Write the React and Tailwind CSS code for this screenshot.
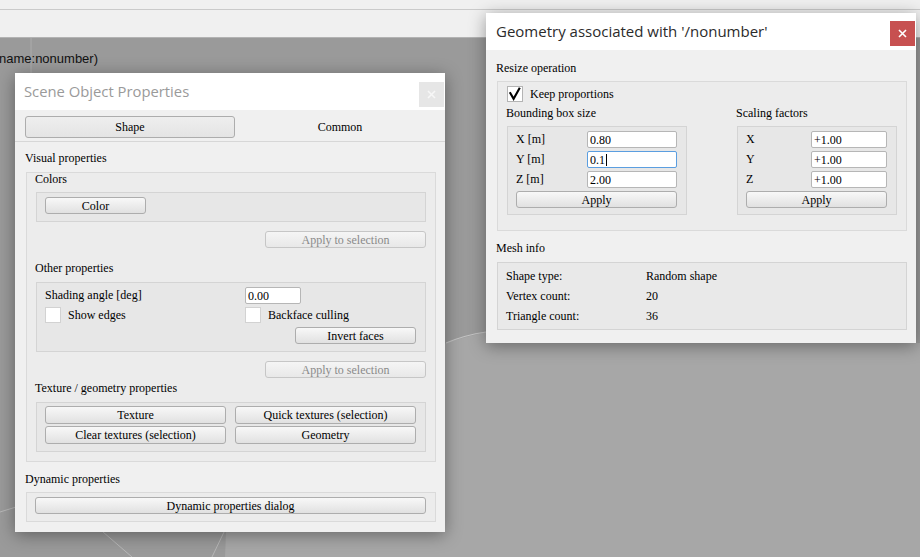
import React from "react";

const SERIF = "font-['Liberation_Serif','Times_New_Roman',serif]";
const TITLE = "font-['Segoe_UI','Open_Sans','Noto_Sans',sans-serif]";

function Btn({ className = "", disabled, children }) {
  return (
    <div
      className={`flex items-center justify-center rounded-[3px] border text-[12px] leading-none bg-linear-to-b whitespace-nowrap ${
        disabled
          ? "border-[#c6c6c6] from-[#f5f5f5] to-[#e8e8e8] text-[#8a8a8a]"
          : "border-[#adadad] from-[#f8f8f8] to-[#e1e1e1] text-black"
      } ${className}`}
    >
      {children}
    </div>
  );
}

function Check({ checked }) {
  return (
    <div
      className={`w-[16px] h-[16px] shrink-0 bg-white border ${
        checked ? "border-[#b4b4b4]" : "border-[#d2d2d2]"
      }`}
    >
      {checked && (
        <svg width="14" height="14" viewBox="0 0 14 14">
          <path d="M1.8 5.2 L5.6 11.8 L11.8 0.8" stroke="#000" strokeWidth="2.1" fill="none" />
        </svg>
      )}
    </div>
  );
}

function Field({ className = "", focused, children }) {
  return (
    <div
      className={`h-[17px] bg-white border rounded-[2px] px-[2px] flex items-center text-[12px] leading-none text-black ${
        focused ? "border-[#5b9ee0]" : "border-[#b6b6b6]"
      } ${className}`}
    >
      {children}
    </div>
  );
}

function CloseX({ color }) {
  return (
    <svg width="9" height="9" viewBox="0 0 9 9">
      <path d="M1 1 L8 8 M8 1 L1 8" stroke={color} strokeWidth="1.6" />
    </svg>
  );
}

function SceneDialog() {
  return (
    <div className={`absolute left-[15px] top-[73px] w-[430px] h-[459px] flex flex-col bg-[#f0f0f0] shadow-[0_3px_16px_rgba(0,0,0,0.38)] ${SERIF}`}>
      <div className="h-[37px] shrink-0 bg-white flex items-start justify-between pl-[9px] pr-[1px]">
        <div className={`${TITLE} text-[14.8px] leading-[37px] text-[#9a9a9a]`}>Scene Object Properties</div>
        <div className="mt-[9px] w-[25px] h-[25px] bg-[#e6e6e6] flex items-center justify-center">
          <CloseX color="#f7f7f7" />
        </div>
      </div>
      <div className="flex flex-col text-[12px] text-black">
        <div className="mt-[6px] pl-[10px] flex h-[22px]">
          <Btn className="w-[210px] h-[22px] !from-[#eeeeee] !to-[#e4e4e4]">Shape</Btn>
          <div className="w-[210px] h-[22px] flex items-center justify-center leading-none">Common</div>
        </div>
        <div className="mt-[3px] h-[1px] bg-[#d7d7d7]" />
        <div className="pl-[10px] flex flex-col">
          <div className="mt-[8px] leading-[16px] h-[16px]">Visual properties</div>
          <div className="mt-[6px] ml-[1px] w-[410px] h-[290px] border border-[#dadada] bg-[#ececec] px-[9px] flex flex-col">
            <div className="leading-[12px] h-[12px] -ml-[1px]">Colors</div>
            <div className="mt-[7px] h-[30px] border border-[#d4d4d4] bg-[#e7e7e7] pl-[8px] pt-[4px]">
              <Btn className="w-[101px] h-[17px]">Color</Btn>
            </div>
            <div className="mt-[9px] flex justify-end">
              <Btn disabled className="w-[161px] h-[17px]">Apply to selection</Btn>
            </div>
            <div className="mt-[14px] leading-[12px] h-[12px] -ml-[1px]">Other properties</div>
            <div className="mt-[8px] h-[70px] border border-[#d4d4d4] bg-[#e7e7e7] pl-[8px] pt-[4px] flex flex-col">
              <div className="flex h-[17px]">
                <div className="w-[200px] leading-[17px]">Shading angle [deg]</div>
                <Field className="w-[56px]">0.00</Field>
              </div>
              <div className="mt-[3px] flex h-[16px]">
                <div className="w-[200px] flex gap-[7px]">
                  <Check />
                  <span className="leading-[16px]">Show edges</span>
                </div>
                <div className="flex gap-[7px]">
                  <Check />
                  <span className="leading-[16px]">Backface culling</span>
                </div>
              </div>
              <div className="mt-[4px] pl-[250px]">
                <Btn className="w-[121px] h-[17px]">Invert faces</Btn>
              </div>
            </div>
            <div className="mt-[9px] flex justify-end">
              <Btn disabled className="w-[161px] h-[17px]">Apply to selection</Btn>
            </div>
            <div className="mt-[4px] leading-[12px] h-[12px] -ml-[1px]">Texture / geometry properties</div>
            <div className="mt-[8px] h-[50px] border border-[#d4d4d4] bg-[#e7e7e7] pl-[8px] pt-[3px] grid grid-cols-[181px_181px] gap-x-[9px] gap-y-[2px] content-start">
              <Btn className="h-[18px]">Texture</Btn>
              <Btn className="h-[18px]">Quick textures (selection)</Btn>
              <Btn className="h-[18px]">Clear textures (selection)</Btn>
              <Btn className="h-[18px]">Geometry</Btn>
            </div>
          </div>
          <div className="mt-[9px] leading-[16px] h-[16px]">Dynamic properties</div>
          <div className="mt-[5px] ml-[1px] w-[410px] h-[30px] border border-[#dadada] bg-[#ececec] pl-[8px] pt-[4px]">
            <Btn className="w-[391px] h-[17px]">Dynamic properties dialog</Btn>
          </div>
        </div>
      </div>
    </div>
  );
}

function Row({ label, labelW, fieldW, value, focused }) {
  return (
    <div className="flex h-[17px]">
      <div className={`${labelW} leading-[17px]`}>{label}</div>
      <Field className={fieldW} focused={focused}>
        {value}
        {focused && <span className="inline-block w-[1px] h-[12px] bg-black ml-[1px]" />}
      </Field>
    </div>
  );
}

function GeometryDialog() {
  return (
    <div className={`absolute left-[486px] top-[13px] w-[430px] h-[330px] flex flex-col bg-[#f0f0f0] shadow-[0_3px_16px_rgba(0,0,0,0.38)] ${SERIF}`}>
      <div className="h-[37px] shrink-0 bg-white flex items-start justify-between pl-[10px] pr-[1px]">
        <div className={`${TITLE} text-[15px] leading-[36px] text-[#2b2b2b]`}>Geometry associated with '/nonumber'</div>
        <div className="mt-[8px] w-[25px] h-[25px] bg-[#c75050] flex items-center justify-center">
          <CloseX color="#ffffff" />
        </div>
      </div>
      <div className="pl-[10px] flex flex-col text-[12px] text-black">
        <div className="mt-[10px] leading-[16px] h-[16px]">Resize operation</div>
        <div className="mt-[5px] ml-[1px] w-[410px] h-[150px] border border-[#dadada] bg-[#ececec] pl-[9px] pt-[4px] flex flex-col">
          <div className="flex gap-[7px] h-[16px]">
            <Check checked />
            <span className="leading-[16px]">Keep proportions</span>
          </div>
          <div className="mt-[4px] flex h-[14px] leading-[14px] -ml-[1px]">
            <div className="w-[230px]">Bounding box size</div>
            <div>Scaling factors</div>
          </div>
          <div className="mt-[6px] flex gap-[50px]">
            <div className="w-[180px] h-[89px] border border-[#d4d4d4] bg-[#e7e7e7] pl-[8px] pt-[4px] flex flex-col gap-[3px]">
              <Row label="X [m]" labelW="w-[71px]" fieldW="w-[90px]" value="0.80" />
              <Row label="Y [m]" labelW="w-[71px]" fieldW="w-[90px]" value="0.1" focused />
              <Row label="Z [m]" labelW="w-[71px]" fieldW="w-[90px]" value="2.00" />
              <Btn className="w-[161px] h-[17px]">Apply</Btn>
            </div>
            <div className="w-[160px] h-[89px] border border-[#d4d4d4] bg-[#e7e7e7] pl-[8px] pt-[4px] flex flex-col gap-[3px]">
              <Row label="X" labelW="w-[65px]" fieldW="w-[76px]" value="+1.00" />
              <Row label="Y" labelW="w-[65px]" fieldW="w-[76px]" value="+1.00" />
              <Row label="Z" labelW="w-[65px]" fieldW="w-[76px]" value="+1.00" />
              <Btn className="w-[141px] h-[17px]">Apply</Btn>
            </div>
          </div>
        </div>
        <div className="mt-[9px] leading-[16px] h-[16px]">Mesh info</div>
        <div className="mt-[6px] ml-[1px] w-[410px] h-[68px] border border-[#d4d4d4] bg-[#e9e9e9] pl-[8px] pt-[3px] flex flex-col">
          {[
            ["Shape type:", "Random shape"],
            ["Vertex count:", "20"],
            ["Triangle count:", "36"],
          ].map(([k, v]) => (
            <div key={k} className="flex h-[20px] leading-[20px]">
              <div className="w-[140px]">{k}</div>
              <div>{v}</div>
            </div>
          ))}
        </div>
      </div>
    </div>
  );
}

export default function App() {
  return (
    <div className="relative w-[920px] h-[557px] overflow-hidden flex flex-col bg-[#a7a7a7]">
      <div className="shrink-0 flex flex-col bg-[#f0f0f0]">
        <div className="h-[9px]" />
        <div className="h-[1px] bg-[#cacaca]" />
        <div className="h-[27px]" />
        <div className="h-[1px] bg-[#b3b3b3]" />
      </div>
      <div className="relative flex-1">
        <svg className="absolute inset-0" width="920" height="519" viewBox="0 0 920 519">
          <rect x="0" y="0" width="920" height="519" fill="#a7a7a7" />
          <polygon points="0,0 920,0 920,305 486,294 447,304 226,494 225,519 0,519" fill="#9a9a9a" />
          <line x1="31" y1="0" x2="31" y2="36" stroke="#ababab" strokeWidth="1" />
          <line x1="0" y1="474" x2="16" y2="469" stroke="#b8b8b8" strokeWidth="1" />
          <line x1="103" y1="494" x2="132" y2="519" stroke="#b8b8b8" strokeWidth="1" />
          <line x1="224" y1="494" x2="212" y2="519" stroke="#b8b8b8" strokeWidth="1" />
          <path d="M446 305 Q465 297 486 294" stroke="#c4c4c4" strokeWidth="1.2" fill="none" />
        </svg>
        <div className="relative pt-[13px] -ml-[1px] font-['Liberation_Sans',Arial,sans-serif] text-[13px] leading-[16px] text-[#111]">
          name:nonumber)
        </div>
      </div>
      <SceneDialog />
      <GeometryDialog />
    </div>
  );
}
